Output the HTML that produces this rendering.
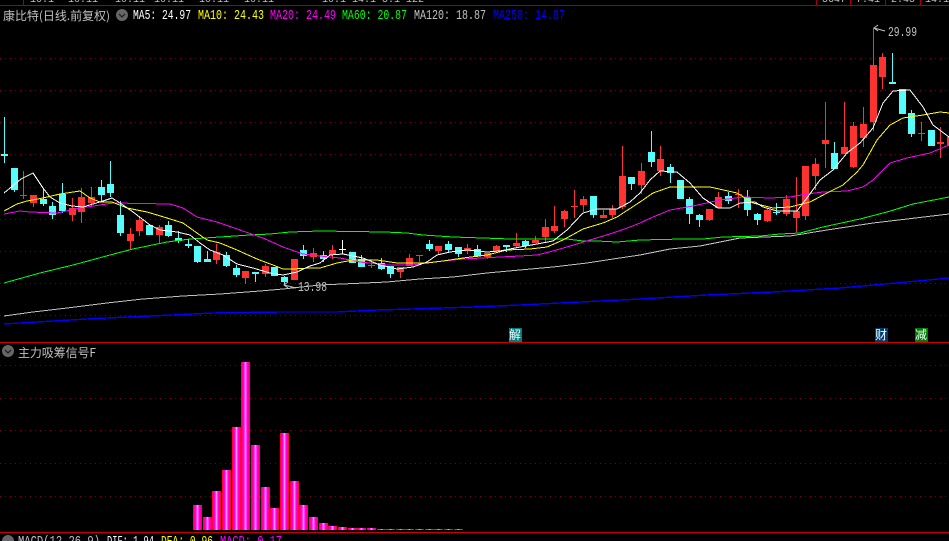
<!DOCTYPE html>
<html><head><meta charset="utf-8"><title>康比特</title>
<style>
html,body{margin:0;padding:0;background:#000;width:949px;height:541px;overflow:hidden}
svg{display:block}
text{font-family:"Liberation Mono","WenQuanYi Zen Hei","Noto Sans CJK SC",monospace;font-size:14px}
.c{font-family:"WenQuanYi Zen Hei","Noto Sans CJK SC",sans-serif;font-size:12px}
.t{font-size:10px}
</style></head><body>
<svg width="949" height="541" viewBox="0 0 949 541" xmlns="http://www.w3.org/2000/svg">
<defs>
<linearGradient id="g" x1="0" x2="1" y1="0" y2="0">
<stop offset="0" stop-color="#ff0000"/><stop offset=".16" stop-color="#ff0090"/><stop offset=".34" stop-color="#ff00ff"/><stop offset=".5" stop-color="#ffb0ff"/><stop offset=".66" stop-color="#ff00ff"/><stop offset=".84" stop-color="#ff0090"/><stop offset="1" stop-color="#ff0000"/>
</linearGradient>
</defs>
<rect width="949" height="541" fill="#000"/>

<!-- top clipped row -->
<g fill="#c0c0c0"><text class="t" x="30" y="2">10:1</text><text class="t" x="68" y="2">10:11</text><text class="t" x="115" y="2">10:11</text><text class="t" x="154" y="2">10:11</text><text class="t" x="199" y="2">10:11</text><text class="t" x="244" y="2">10:11</text><text class="t" x="322" y="2">10:1 14.1 5.1 122</text><text class="t" x="822" y="2">5647</text><text class="t" x="856" y="2">7.41</text><text class="t" x="891" y="2">2.45</text><text class="t" x="925" y="2">14.1</text></g>
<g shape-rendering="crispEdges" fill="none">
<path d="M0 5.5H949" stroke="#a80000"/>
<path d="M23.5 0V5M816.5 0V5M850.5 0V5M885.5 0V5M920.5 0V5" stroke="#a80000"/>
<path d="M0 342.5H949M0 532.5H949" stroke="#c80000"/>
<path d="M0 58.5H949M0 90.5H949M0 122.5H949M0 154.5H949M0 187.5H949M0 219.5H949M0 251.5H949M0 283.5H949M0 315.5H949M0 365.5H949M0 398.5H949M0 430.5H949M0 463.5H949M0 496.5H949" stroke="#7c0000" stroke-dasharray="1 4"/>

<!-- candles -->
<path stroke="#ff3232" stroke-width="1" d="M23.5 171V199M33.5 195V207M72.5 198V221M81.5 188V223M91.5 187V207M130.5 228V250M139.5 216V236M159.5 225V243M216.5 244V264M245.5 271V284M265.5 264V277M294.5 259V280M313.5 248V262M332.5 245V259M371.5 260V268M400.5 267V278M409.5 254V266M419.5 255V262M438.5 246V254M467.5 244V254M487.5 253V259M496.5 245V251M516.5 233V248M535.5 236V243M545.5 219V243M554.5 206V233M564.5 210V227M574.5 190V218M583.5 196V212M603.5 210V218M612.5 205V218M622.5 146V209M641.5 163V194M660.5 146V176M709.5 209V221M718.5 192V208M738.5 189V208M767.5 208V222M786.5 195V216M796.5 177V232M805.5 166V220M815.5 158V190M825.5 102V168M844.5 102V154M853.5 122V168M863.5 107V147M873.5 28V131M882.5 53V89M921.5 122V141M940.5 127V158"/>
<path stroke="#ff3232" stroke-width="7" d="M23.5 195V196M33.5 195V203M72.5 208V215M81.5 197V212M91.5 197V203M130.5 234V241M139.5 220V231M159.5 227V235M216.5 252V260M245.5 271V278M265.5 266V274M294.5 259V280M313.5 253V257M332.5 250V255M371.5 265V266M400.5 267V272M409.5 258V266M419.5 255V256M438.5 246V251M467.5 248V251M487.5 253V257M496.5 246V251M516.5 243V246M535.5 240V243M545.5 227V237M554.5 226V231M564.5 211V219M574.5 206V207M583.5 199V205M603.5 215V218M612.5 209V215M622.5 176V207M641.5 171V185M660.5 159V171M709.5 209V220M718.5 197V208M738.5 194V195M767.5 210V221M786.5 199V214M796.5 211V218M805.5 166V216M815.5 164V176M825.5 140V144M844.5 147V154M853.5 126V167M863.5 124V138M873.5 65V122M882.5 57V77M921.5 133V134M940.5 142V144M950.5 137V146"/>
<path stroke="#54fcfc" stroke-width="1" d="M4.5 117V163M14.5 168V192M43.5 188V206M52.5 202V219M62.5 183V213M101.5 180V201M110.5 161V197M120.5 201V236M149.5 225V235M168.5 221V237M178.5 231V243M188.5 239V248M197.5 246V263M207.5 251V262M226.5 252V267M236.5 265V277M255.5 272V282M274.5 267V276M284.5 276V285M303.5 245V259M323.5 251V262M352.5 252V263M361.5 255V267M381.5 258V270M390.5 266V278M429.5 240V251M448.5 241V252M458.5 247V257M477.5 245V257M506.5 245V252M525.5 240V248M593.5 196V218M631.5 177V190M651.5 131V167M670.5 164V183M680.5 180V199M689.5 197V224M699.5 214V227M728.5 192V204M747.5 190V216M757.5 213V225M776.5 203V215M834.5 142V169M892.5 53V84M902.5 89V114M911.5 110V137M931.5 130V146"/>
<path stroke="#54fcfc" stroke-width="7" d="M4.5 154V156M14.5 168V190M43.5 199V204M52.5 206V215M62.5 194V211M101.5 187V195M110.5 184V193M120.5 215V233M149.5 225V235M168.5 225V236M178.5 238V241M188.5 244V246M197.5 246V262M207.5 259V262M226.5 255V266M236.5 268V275M255.5 272V274M274.5 267V276M284.5 277V282M303.5 250V256M323.5 255V259M352.5 252V263M361.5 259V267M381.5 263V269M390.5 266V274M429.5 244V249M448.5 244V250M458.5 247V254M477.5 249V256M506.5 245V247M525.5 241V246M593.5 196V215M631.5 177V184M651.5 152V162M670.5 167V173M680.5 180V199M689.5 199V214M699.5 215V220M728.5 196V201M747.5 197V210M757.5 214V220M776.5 212V213M834.5 153V169M892.5 82V84M902.5 89V114M911.5 113V134M931.5 130V146"/>
<path stroke="#fff" stroke-width="1" d="M342.5 240V254"/><path stroke="#fff" stroke-width="7" d="M342.5 249V250"/>

<!-- moving averages -->
<polyline stroke="#0000ff" stroke-width="1.4" points="4,324 37,322 87,319 127,317 173,315 213,313 280,312 337,312 377,310 413,309 473,307 520,305 580,302 640,299 707,295 773,292 840,288 907,282 949,278"/>
<polyline stroke="#c0c0c0" points="4,316 33,312 67,308 107,303 143,299 183,296 220,294 260,291 283,289 320,285 387,282 420,279 453,277 487,273 520,270 553,267 587,263 613,259 640,255 670,249 700,246 740,238 790,236 827,230 873,223 907,219 949,214"/>
<polyline stroke="#00ff00" points="4,283 40,273 73,265 110,255 133,249 167,242 190,239 220,237 250,235 270,234 290,232 320,231 385,232 407,233 423,235 453,237 483,238 510,239 567,239 583,241 597,241 617,242 640,240 683,239 703,239 723,237 760,236 780,234 800,233 823,227 860,219 887,212 913,204 949,197"/>
<polyline stroke="#ff00ff" points="4,214 20,211 30,212 57,213 80,208 100,205 113,203 170,204 183,208 197,217 217,222 240,230 263,238 283,247 303,254 320,256 340,258 360,262 387,265 413,265 433,262 463,259 500,257 520,256 537,255 553,251 577,244 590,240 613,233 630,227 640,223 653,217 670,210 693,206 720,200 743,197 770,198 790,197 807,194 823,192 847,191 863,187 873,180 890,163 907,158 930,153 949,145"/>
<polyline stroke="#ffff00" points="4,211 17,204 27,201 43,198 60,194 80,191 90,198 100,202 112,202 127,208 147,212 167,218 183,223 197,233 207,240 220,243 237,250 257,259 273,265 283,269 293,269 310,268 320,268 337,263 353,260 377,260 397,263 427,263 443,261 463,258 487,255 507,250 530,249 547,247 563,240 583,229 603,223 617,217 640,202 653,193 670,187 710,187 737,193 753,203 773,208 790,207 810,202 827,193 843,185 857,172 863,165 877,140 890,125 903,118 923,115 940,112 949,113"/>
<polyline stroke="#ffffff" points="4,193 21,179 33,173 43,188 50,197 60,203 72,206 83,207 93,204 103,201 112,198 120,203 133,212 150,225 160,230 177,232 190,235 200,243 210,250 223,255 237,264 253,268 270,273 283,275 297,272 310,266 320,263 330,255 343,254 363,258 380,265 397,269 413,267 427,262 437,255 450,252 467,250 487,252 500,251 520,247 537,244 553,241 567,230 583,213 597,209 617,209 630,202 640,193 650,180 660,171 677,172 690,183 703,198 718,208 730,208 740,203 755,202 763,207 777,211 797,211 807,198 820,180 833,170 847,153 860,143 873,128 883,103 893,91 910,90 923,107 933,125 949,137"/>

<!-- signal boxes -->
<rect x="509" y="328" width="13" height="14" fill="#007c7c" stroke="none"/>
<rect x="875" y="328" width="13" height="14" fill="#003c6c" stroke="none"/>
<rect x="915" y="328" width="13" height="14" fill="#007c00" stroke="none"/>

<!-- histogram -->
<g fill="url(#g)" stroke="none">
<rect x="193" y="505" width="9" height="25"/><rect x="203" y="517" width="9" height="13"/><rect x="212" y="491" width="9" height="39"/><rect x="222" y="470" width="9" height="60"/><rect x="232" y="427" width="9" height="103"/><rect x="241" y="362" width="9" height="168"/><rect x="251" y="445" width="9" height="85"/><rect x="261" y="487" width="9" height="43"/><rect x="270" y="508" width="9" height="22"/><rect x="280" y="433" width="9" height="97"/><rect x="290" y="481" width="9" height="49"/><rect x="299" y="505" width="9" height="25"/><rect x="309" y="517" width="9" height="13"/><rect x="319" y="523" width="9" height="7"/><rect x="328" y="526" width="9" height="4"/><rect x="338" y="527" width="9" height="3"/><rect x="348" y="528" width="9" height="2"/><rect x="357" y="528" width="9" height="2"/><rect x="367" y="528" width="9" height="2"/><rect x="377" y="529" width="9" height="1"/><rect x="386" y="529" width="9" height="1"/><rect x="396" y="529" width="9" height="1"/><rect x="405" y="529" width="9" height="1"/><rect x="415" y="529" width="9" height="1"/><rect x="425" y="529" width="9" height="1"/><rect x="434" y="529" width="9" height="1"/><rect x="444" y="529" width="9" height="1"/><rect x="454" y="529" width="9" height="1"/>
</g>
</g>

<g fill="#f0ffff"><text class="c" x="509" y="339">解</text><text class="c" x="875" y="339">财</text><text class="c" x="915" y="339">减</text></g>

<!-- legend -->
<text class="c" x="3" y="20" fill="#c0c0c0" textLength="107" lengthAdjust="spacing">康比特(日线.前复权)</text>
<circle cx="122" cy="15" r="6" fill="#666"/><path d="M119 14l3 3 3-3" stroke="#222" stroke-width="1.3" fill="none"/>
<text x="133" y="19" fill="#ffffff" textLength="58" lengthAdjust="spacingAndGlyphs">MA5: 24.97</text>
<text x="198" y="19" fill="#ffff00" textLength="66" lengthAdjust="spacingAndGlyphs">MA10: 24.43</text>
<text x="270" y="19" fill="#ff00ff" textLength="66" lengthAdjust="spacingAndGlyphs">MA20: 24.49</text>
<text x="342" y="19" fill="#00ff00" textLength="65" lengthAdjust="spacingAndGlyphs">MA60: 20.87</text>
<text x="414" y="19" fill="#c0c0c0" textLength="72" lengthAdjust="spacingAndGlyphs">MA120: 18.87</text>
<text x="493" y="19" fill="#0000ff" textLength="72" lengthAdjust="spacingAndGlyphs">MA250: 14.87</text>

<!-- annotations -->
<path d="M878 25l-4 3 4 3M874 28l11 3" stroke="#c0c0c0" fill="none"/>
<text x="888" y="36" fill="#c0c0c0" textLength="29" lengthAdjust="spacingAndGlyphs">29.99</text>
<path d="M288 282l-4 3 4 3M284 285l12 3" stroke="#c0c0c0" fill="none"/>
<text x="298" y="291" fill="#c0c0c0" textLength="29" lengthAdjust="spacingAndGlyphs">13.98</text>

<!-- lower panel -->
<circle cx="8" cy="351" r="6" fill="#666"/><path d="M5 350l3 3 3-3" stroke="#222" stroke-width="1.3" fill="none"/>
<text class="c" x="18" y="357" fill="#c0c0c0" textLength="78" lengthAdjust="spacing">主力吸筹信号F</text>

<!-- bottom panel -->
<circle cx="8" cy="541" r="6" fill="#666"/>
<text x="18" y="545" fill="#c0c0c0" textLength="82" lengthAdjust="spacingAndGlyphs">MACD(12,26,9)</text>
<text x="107" y="545" fill="#ffffff" textLength="47" lengthAdjust="spacingAndGlyphs">DIF: 1.94</text>
<text x="161" y="545" fill="#ffff00" textLength="52" lengthAdjust="spacingAndGlyphs">DEA: 0.96</text>
<text x="220" y="545" fill="#ff00ff" textLength="62" lengthAdjust="spacingAndGlyphs">MACD: 0.17</text>
</svg>
</body></html>
